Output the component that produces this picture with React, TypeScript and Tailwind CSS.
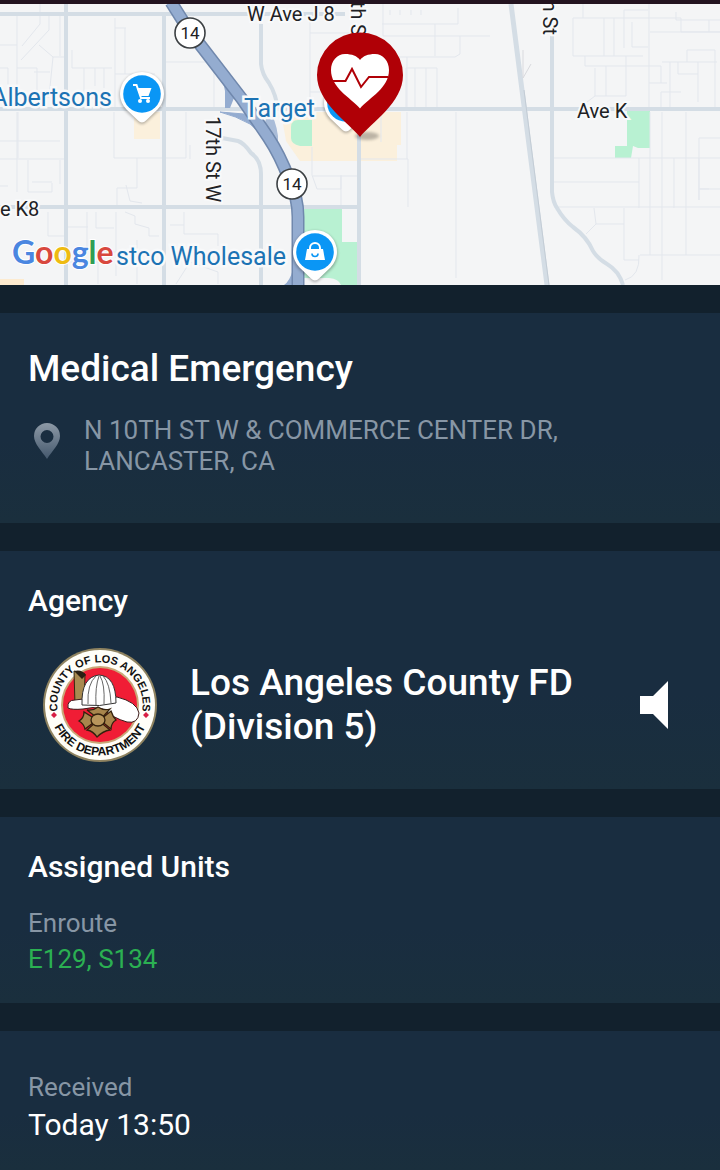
import type { ReactNode } from 'react';

const MAP_FONT = 'font-[Roboto,"Liberation_Sans",sans-serif]';

// Thin parcel and side street lines
const MINOR_STREETS = [
  'M17 16v94M17 112v80M0 45h17M0 68h8v42M17 68h20v42M34 72h16M40 4v20l-18 22M49 12v18l-28 30M39 45l14 12h12M53 57l-4 40h-14',
  'M60 16v40M72 50v18h40M115 18v92M125 28v46M115 28h11M115 74h40M84 68v30h28M95 68v18M104 68v20M164 62h42l8 8v38',
  'M0 186h8M18 112v46M0 141h60M114 112v46h72v-46M0 159h64M28 160v32h24v-9M60 160v24M32 182h20M137 158v30h-20v20M126 185l4 16 12 2M190 145v14',
  'M48 212v24h16M87 212v40M68 227h20M96 212v16h18M116 212v64M125 212l10 4v8l14 4v8h10M184 212v22h34v12M170 225h14M137 240v44M92 252h24M68 262h30v22M120 262h18M176 284l14-22 28 10v12',
  'M310 22v88M310 33h40M383 4v32h107M382 24h76v-16M390 10v5M400 10v5M411 10v5M421 10v5M435 24v32M460 36v18l-5 3h-72M406 68v40M415 68v40M426 68v40M437 68v40M406 68h31M407 57v53M310 92h20',
  'M407 112v47M360 159h48v48M312 147v28l5 14h24v-14M313 176h45M341 176v32M456 112v166M381 110v32',
  'M573 18v38h70M604 18v38M614 18v38M573 18h108v14h39M649 4v106M585 56v10h76v17h6M595 68v28l-8 6M606 66v30M626 56v40M595 96h31M624 48v-38h24M632 22v25h16M583 4v14M661 83h-12M661 92v17M662 62h55M670 62v47M698 62v40M687 50h28v60M678 62v12h20M687 50v12M650 32h70M676 12v8h44M709 32v-12',
  'M553 158h167M553 182h86M554 207h166M639 158v50M650 112v143M662 112v168M674 158v50M686 112v143M699 158v42M709 189h-10M640 255h80M594 208l2 16h28M596 224l-10 10M624 208v52h15M625 280q15-4 14-25M681 92h-20M720 138h-21v62M700 189h20',
];

// Main surface streets
const MAJOR_STREETS = [
  'M0 14h345',
  'M0 109h720',
  'M0 207h358',
  'M66 4v281',
  'M164 14v271',
  'M359 130v155',
  'M552 36v156q1 10 5 16 7 12 16 19 14 10 20 24 5 8 14 13 12 7 16 21',
  'M261 24v40q1 10 8 19 7 11 9 27',
  'M222 138l16 3q6 2 13 12 10 7 10 21v111',
];

const FREEWAY = 'M171 2l17 27 54 70 26 38q12 18 21 42 9 18 9 38v70';

function Road({ d, width, color }: { d: string; width: number; color: string }) {
  return <path d={d} fill="none" stroke={color} strokeWidth={width} />;
}

function RouteShield({ x, y }: { x: number; y: number }) {
  return (
    <g>
      <circle cx={x} cy={y} r={15} fill="#fff" stroke="#3c4043" strokeWidth={1.6} />
      <text x={x} y={y + 6} textAnchor="middle" fontSize={17} fill="#202124">
        14
      </text>
    </g>
  );
}

function PlacePin({ x, y, children }: { x: number; y: number; children?: ReactNode }) {
  return (
    <g transform={`translate(${x} ${y})`}>
      <path
        d="M0 30q-2 0-4-2l-12-11a22.500 22.500 0 1 1 32 0L4 28q-2 2-4 2z"
        fill="#000"
        opacity={0.3}
        filter="url(#soft)"
      />
      <path d="M0 28.500q-2 0-4-2l-11.500-11a22 22 0 1 1 31 0L4 26.500q-2 2-4 2z" fill="#fff" />
      <circle r={18.800} fill="#0a96f5" />
      {children}
    </g>
  );
}

function MapView() {
  return (
    <svg
      viewBox="0 4 720 281"
      preserveAspectRatio="xMidYMid slice"
      className={`block w-full ${MAP_FONT}`}
      role="img"
      aria-label="Incident map"
    >
      <defs>
        <filter id="soft" x="-50%" y="-100%" width="200%" height="300%">
          <feGaussianBlur stdDeviation="1.8" />
        </filter>
      </defs>
      <rect y={4} width={720} height={281} fill="#f4f5f6" />

      {/* Parks and commercial areas */}
      <path d="M134 112h26v27h-26z" fill="#fbf0dc" />
      <path d="M281 112h120v33h-4v16h-97l-14-20z" fill="#fbf0dc" />
      <path d="M0 279h24v6H0z" fill="#fdebd0" />
      <path d="M291 127q0-7 7-7h14v26h-12q-9-2-9-8z" fill="#b8f1d2" />
      <path d="M304 209h38v33h16v43h-17q-2-6-12-7h-25z" fill="#b8f1d2" />
      <path d="M627 111h23v37h-12l-5-2-2 12h-16v-12h12z" fill="#b8f1d2" />

      <Road d={MINOR_STREETS.join('')} width={1} color="#e3e7ed" />
      {MAJOR_STREETS.map((d) => (
        <Road key={d} d={d} width={4} color="#d4dde5" />
      ))}
      <Road d="M511 4l18 141 18 140" width={5} color="#d4dde5" />
      <Road d="M524 90l7 55 18 140" width={1} color="#c3ccd5" />
      <Road d="M523 50v28l8-14" width={1} color="#d9dade" />

      {/* Antelope Valley Freeway and its ramps */}
      <path d="M223 82l2 9v17h5l4-10 6 2-12-16z" fill="#94acd0" />
      <path d="M220 112l24 2 10 6 14 20-18-16q-14-8-30-12z" fill="#94acd0" stroke="#94acd0" />
      <path d="M268 108q8 12 10 28v16l-14-24z" fill="#a9bcd8" />
      <path d="M284 285q6-4 9-16v16z" fill="#94acd0" />
      <Road d={FREEWAY} width={13} color="#7088ad" />
      <Road d={FREEWAY} width={10} color="#94acd0" />

      <RouteShield x={190} y={33} />
      <RouteShield x={292} y={184} />

      <g fontSize={20} fill="#202124" stroke="#f8f9fa" strokeWidth={4} paintOrder="stroke">
        <text x={247} y={21}>W Ave J 8</text>
        <text x={577} y={118}>Ave K</text>
        <text x={0} y={216}>e K8</text>
        <text transform="translate(206 116) rotate(90)">17th St W</text>
        <text transform="translate(351 36) rotate(90)" textAnchor="end">th S</text>
        <text transform="translate(543 35) rotate(90)" textAnchor="end">h St</text>
      </g>

      <g fontSize={25} fill="#1c73b4" stroke="#f8f9fa" strokeWidth={5} paintOrder="stroke">
        <text x={112} y={106} textAnchor="end">Albertsons</text>
        <text x={244} y={117}>Target</text>
        <text x={286} y={265} textAnchor="end">stco Wholesale</text>
      </g>

      <PlacePin x={142} y={94}>
        <path d="M-9-9h3.500L-1 4H8" fill="none" stroke="#fff" strokeWidth={2} />
        <path d="M-5-6H9.500L6.500 2H-2z" fill="#fff" />
        <circle cx={-2} cy={7} r={2} fill="#fff" />
        <circle cx={6} cy={7} r={2} fill="#fff" />
      </PlacePin>
      <PlacePin x={315} y={252}>
        <path d="M-8-3H8L10 8H-10z" fill="#fff" />
        <path d="M-5-3V-4a5 5 0 0 1 10 0v1" fill="none" stroke="#fff" strokeWidth={2} />
        <path d="M-3 1.500a3 3 0 0 0 6 0" fill="none" stroke="#0a96f5" strokeWidth={1.600} />
      </PlacePin>
      <PlacePin x={346} y={103} />

      {/* Incident marker */}
      <ellipse cx={367} cy={136} rx={12} ry={4} fill="#000" opacity={0.25} filter="url(#soft)" />
      <path
        d="M360 137C349 123 317 103 317 75a43 42.500 0 0 1 86 0C403 103 371 123 360 137z"
        fill="#b00006"
      />
      <path
        d="M360 108.500C350 97 331 88 331 70c0-9 6-16 14-16 7 0 12 2 15 6 3-4 8-6 15-6 8 0 14 7 14 16 0 18-19 27-29 38.500z"
        fill="#fff"
      />
      <path d="M333 81h12.500L352 69l9 18 8-10h19" fill="none" stroke="#b00006" strokeWidth={2} />

      <text x={12} y={264} fontSize={32} stroke="#fff" strokeWidth={2} paintOrder="stroke" className="font-[Lato,sans-serif] font-bold">
        <tspan fill="#4a86e0">G</tspan>
        <tspan fill="#d8483e">o</tspan>
        <tspan fill="#eebb12">o</tspan>
        <tspan fill="#4a86e0">g</tspan>
        <tspan fill="#2f9e53">l</tspan>
        <tspan fill="#d8483e">e</tspan>
      </text>
    </svg>
  );
}

function LocationIcon() {
  return (
    <svg viewBox="0 0 26 36" className="h-9 w-[26px] shrink-0" aria-hidden="true">
      <defs>
        <linearGradient id="pinFade" x1="0" y1="0" x2="0" y2="1">
          <stop offset="0" stopColor="#8d99a6" />
          <stop offset="1" stopColor="#44586d" />
        </linearGradient>
      </defs>
      <path
        fillRule="evenodd"
        d="M13 0a13 13 0 0 1 13 13c0 8-8 15-13 23C8 28 0 21 0 13A13 13 0 0 1 13 0zm0 7a6.500 6.500 0 1 0 0 13 6.500 6.500 0 0 0 0-13z"
        fill="url(#pinFade)"
      />
    </svg>
  );
}

function AgencySeal() {
  return (
    <svg viewBox="0 0 116 116" className="size-[116px] shrink-0" role="img" aria-label="County of Los Angeles Fire Department">
      <defs>
        <path id="sealTop" d="M17.300 71a42.700 42.700 0 1 1 81.400 0" />
        <path id="sealBottom" d="M7.500 58a50.500 50.500 0 0 0 101 0" />
      </defs>
      <circle cx={58} cy={58} r={57} fill="#8f8360" />
      <circle cx={58} cy={58} r={55} fill="#fffef8" />
      <circle cx={58} cy={58} r={39} fill="#c9a878" />
      <circle cx={58} cy={58} r={37} fill="#f01d35" />
      <g fill="#111" className="font-[Liberation_Sans,sans-serif] font-bold">
        <text textAnchor="middle" fontSize={11}>
          <textPath href="#sealTop" startOffset="50%">COUNTY OF LOS ANGELES</textPath>
        </text>
        <text textAnchor="middle" fontSize={12}>
          <textPath href="#sealBottom" startOffset="50%">FIRE DEPARTMENT</textPath>
        </text>
      </g>
      <path d="M12 65l3 3-3 3-3-3zM104 65l3 3-3 3-3-3z" fill="#d81f45" />

      {/* Helmet */}
      <path d="M32 24l11 3-1 34-9-3z" fill="#a88a50" stroke="#33270f" />
      <path d="M32 24q8-2 12 4l-4 4z" fill="#2a2013" />
      <path
        d="M26 61q-1-8 7-8l8-1 34-2q20 5 22 16-1 11-12 9-14-4-24-13-10-3-20 0-11 1-15-1z"
        fill="#fff"
        stroke="#3b1a1a"
      />
      <path d="M40 58q-1-28 17-30 17 1 17 28-16 4-34 2z" fill="#fff" stroke="#333" />
      <path d="M46 57q-1-20 8-28M54 58q-1-18 3-29M62 57q1-20-4-28M69 56q-1-20-8-27" fill="none" stroke="#555" strokeWidth={0.9} />

      {/* Maltese badge */}
      <g fill="#a8854c" stroke="#33210d" strokeWidth={1.300}>
        <path d="M45 63q6 1 11-3 6 4 12 2l-10 11z" />
        <path d="M69 64q2 6 5 9-5 3-5 9L58 73z" />
        <path d="M68 83q-7 1-13 7-4-6-10-7l11-10z" />
        <path d="M43 82q-1-5-6-8 5-3 5-9l13 8z" />
        <ellipse cx={56} cy={73} rx={7} ry={6} fill="#b9965c" />
      </g>
    </svg>
  );
}

function Card({ className, children }: { className: string; children: ReactNode }) {
  return (
    <section className={`bg-linear-to-b from-[#192d40] from-60% to-[#1a2f3d] px-7 ${className}`}>
      {children}
    </section>
  );
}

export default function App() {
  return (
    <div className='flex min-h-screen flex-col bg-[#12212d] font-[Roboto,"Liberation_Sans",sans-serif] text-white'>
      <div className="h-1 bg-[#23131f]" />
      <MapView />

      <main className="mt-7 flex flex-1 flex-col gap-7">
        <Card className="pt-8 pb-[46px]">
          <h1 className="text-[37px] leading-12 font-medium">Medical Emergency</h1>
          <div className="mt-[22px] flex items-start gap-6 pl-1.5">
            <div className="pt-2">
              <LocationIcon />
            </div>
            <address className="text-[26px] leading-[31px] text-[#8796a5] not-italic">
              N 10TH ST W &amp; COMMERCE CENTER DR,
              <br />
              LANCASTER, CA
            </address>
          </div>
        </Card>

        <Card className="pt-8 pb-[26px]">
          <h2 className="text-[30px] leading-9 font-medium">Agency</h2>
          <div className="mt-7 flex items-center pl-3.5">
            <AgencySeal />
            <p className="ml-8 flex-1 text-[37px] leading-11 font-medium">
              Los Angeles County FD
              <br />
              (Division 5)
            </p>
            <button type="button" aria-label="Play audio" className="mr-6">
              <svg viewBox="0 0 28 48" className="h-12 w-7" aria-hidden="true">
                <path d="M0 15h13L28 0v48L13 33H0z" fill="#fff" />
              </svg>
            </button>
          </div>
        </Card>

        <Card className="pt-8 pb-[26px]">
          <h2 className="text-[30px] leading-9 font-medium">Assigned Units</h2>
          <p className="mt-5 text-[26px] leading-9 text-[#8796a5]">Enroute</p>
          <p className="text-[26px] leading-9 text-[#2bb052]">E129, S134</p>
        </Card>

        <Card className="flex-1 pt-[38px] pb-6">
          <p className="text-[26px] leading-9 text-[#8796a5]">Received</p>
          <p className="text-[30px] leading-10">Today 13:50</p>
        </Card>
      </main>
    </div>
  );
}
